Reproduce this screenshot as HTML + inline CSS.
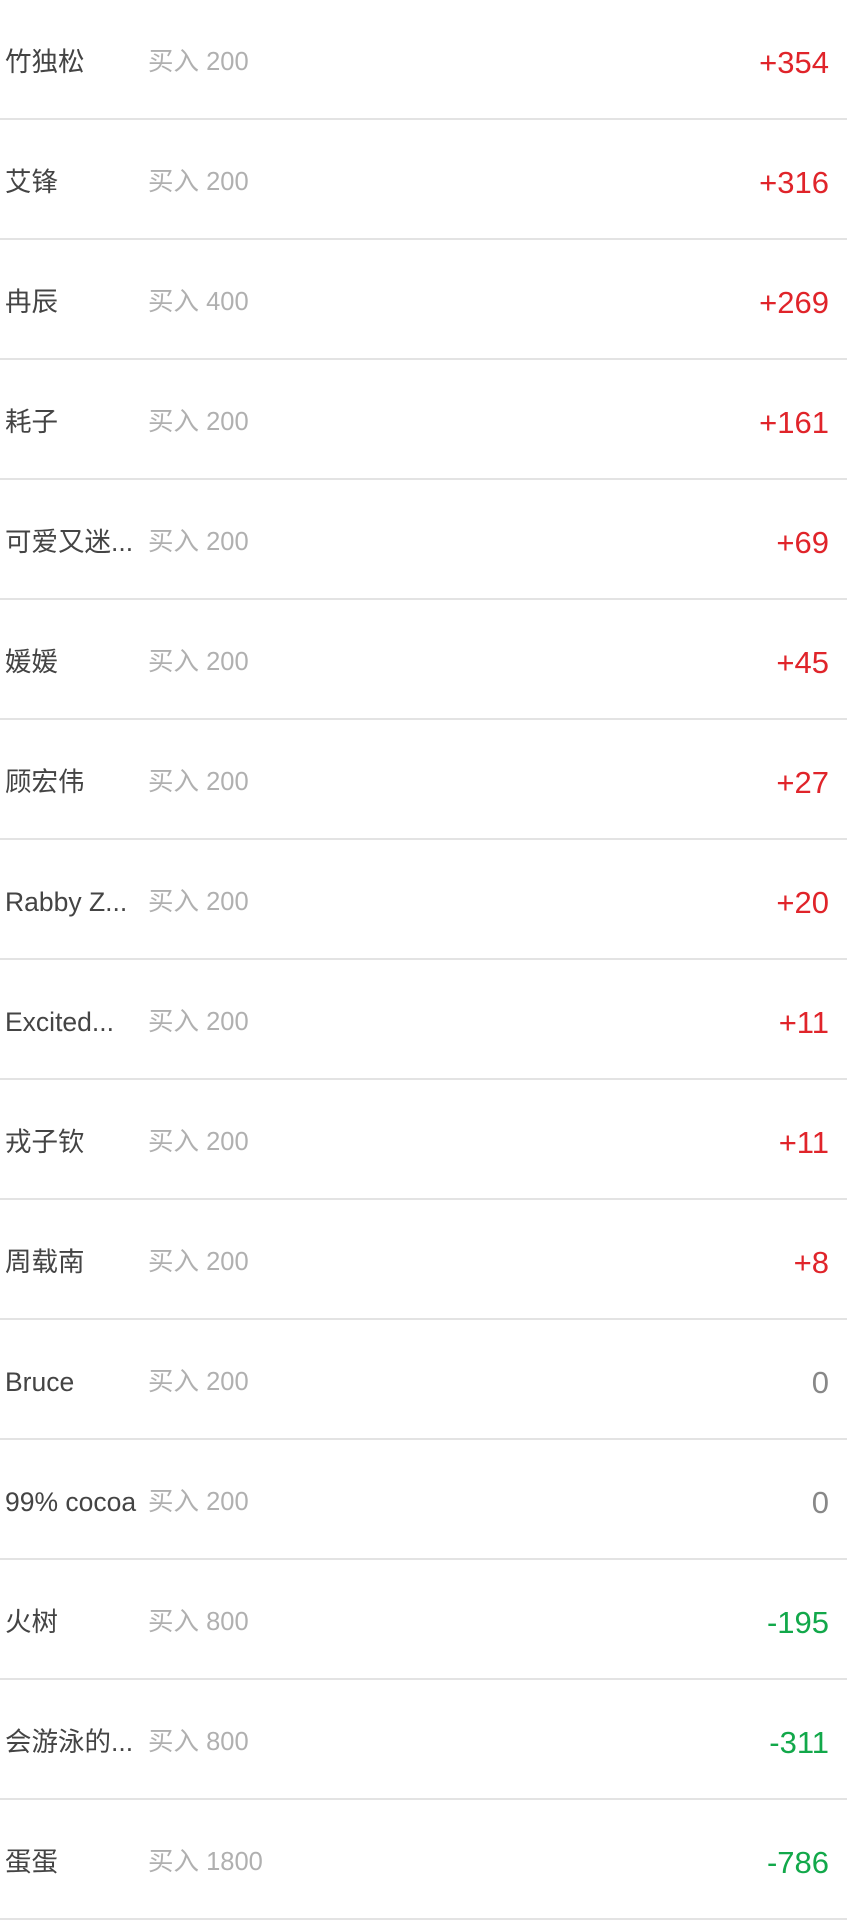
<!DOCTYPE html>
<html><head><meta charset="utf-8"><style>
body{margin:0;width:847px;height:1920px;background:#fff;overflow:hidden;font-family:"Liberation Sans","Noto Sans CJK SC",sans-serif}
.r{position:relative;height:118px;border-bottom:2px solid #e3e3e3}
.n{position:absolute;left:5px;top:3px;line-height:118px;font-size:26.5px;color:#444;width:142px;white-space:nowrap;overflow:hidden}
.b{position:absolute;left:148px;top:3px;line-height:118px;font-size:25.5px;color:#b0b0b0}
.v{position:absolute;right:18px;top:3px;line-height:120px;font-size:31px}
.p{color:#e0242a}.g{color:#12a84a}.z{color:#888}
</style></head><body>
<div class="r"><span class="n">竹独松</span><span class="b">买入 200</span><span class="v p">+354</span></div>
<div class="r"><span class="n">艾锋</span><span class="b">买入 200</span><span class="v p">+316</span></div>
<div class="r"><span class="n">冉辰</span><span class="b">买入 400</span><span class="v p">+269</span></div>
<div class="r"><span class="n">耗子</span><span class="b">买入 200</span><span class="v p">+161</span></div>
<div class="r"><span class="n">可爱又迷...</span><span class="b">买入 200</span><span class="v p">+69</span></div>
<div class="r"><span class="n">媛媛</span><span class="b">买入 200</span><span class="v p">+45</span></div>
<div class="r"><span class="n">顾宏伟</span><span class="b">买入 200</span><span class="v p">+27</span></div>
<div class="r"><span class="n">Rabby Z...</span><span class="b">买入 200</span><span class="v p">+20</span></div>
<div class="r"><span class="n">Excited...</span><span class="b">买入 200</span><span class="v p">+11</span></div>
<div class="r"><span class="n">戎子钦</span><span class="b">买入 200</span><span class="v p">+11</span></div>
<div class="r"><span class="n">周载南</span><span class="b">买入 200</span><span class="v p">+8</span></div>
<div class="r"><span class="n">Bruce</span><span class="b">买入 200</span><span class="v z">0</span></div>
<div class="r"><span class="n">99% cocoa</span><span class="b">买入 200</span><span class="v z">0</span></div>
<div class="r"><span class="n">火树</span><span class="b">买入 800</span><span class="v g">-195</span></div>
<div class="r"><span class="n">会游泳的...</span><span class="b">买入 800</span><span class="v g">-311</span></div>
<div class="r"><span class="n">蛋蛋</span><span class="b">买入 1800</span><span class="v g">-786</span></div>
</body></html>
